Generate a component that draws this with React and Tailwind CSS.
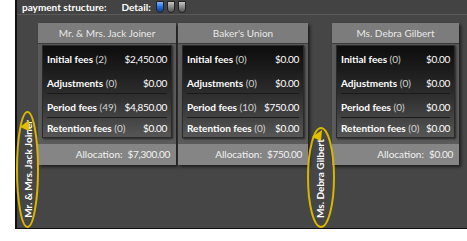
import React from "react";

const cards = [
  {
    name: "Mr. & Mrs. Jack Joiner",
    rows: [
      ["Initial fees", "(2)", "$2,450.00"],
      ["Adjustments", "(0)", "$0.00"],
      ["Period fees", "(49)", "$4,850.00"],
      ["Retention fees", "(0)", "$0.00"],
    ],
    alloc: "$7,300.00",
  },
  {
    name: "Baker's Union",
    rows: [
      ["Initial fees", "(0)", "$0.00"],
      ["Adjustments", "(0)", "$0.00"],
      ["Period fees", "(10)", "$750.00"],
      ["Retention fees", "(0)", "$0.00"],
    ],
    alloc: "$750.00",
  },
  {
    name: "Ms. Debra Gilbert",
    rows: [
      ["Initial fees", "(0)", "$0.00"],
      ["Adjustments", "(0)", "$0.00"],
      ["Period fees", "(0)", "$0.00"],
      ["Retention fees", "(0)", "$0.00"],
    ],
    alloc: "$0.00",
  },
];

function Card({ data, w }) {
  return (
    <div className={`flex flex-col bg-[#5b5b5b] shadow-[2px_2px_3px_rgba(0,0,0,0.6)] ${w}`}>
      <div className="h-[21px] flex items-center justify-center bg-[#7c7c7c] text-[#e8e8e8] text-[10px] border-b border-[#3c3c3c]">
        {data.name}
      </div>
      <div className="mx-[4px] mt-[1px] px-[4px] bg-gradient-to-b from-[#0d0d0d] via-[#2b2b2b] to-[#565656] border border-[#2a2a2a] shadow-[1px_1px_2px_rgba(0,0,0,0.6)]">
        {data.rows.map((r, i) => (
          <div
            key={i}
            className={
              i < 3
                ? "h-[24px] pt-[3px] flex items-center justify-between border-b border-[#1a1a1a] text-[10px]"
                : "h-[19px] pt-[2px] flex items-center justify-between text-[10px]"
            }
          >
            <span className="whitespace-nowrap">
              <span className="font-bold text-white">{r[0]}</span>{" "}
              <span className="text-[#d4d4d4]">{r[1]}</span>
            </span>
            <span className="text-white tracking-[-0.3px]">{r[2]}</span>
          </div>
        ))}
      </div>
      <div className="mt-[6px] h-[21px] flex items-center justify-end pr-[6px] bg-[#858585] text-[#f2f2f2] text-[10px] whitespace-pre">
        <span>Allocation:</span>
        <span className="ml-[5px] tracking-[-0.3px]">{data.alloc}</span>
      </div>
    </div>
  );
}

function Gutter({ label, w }) {
  return (
    <div className={`self-stretch flex flex-col justify-end items-center pb-[10px] ${w}`}>
      <span className="[writing-mode:vertical-rl] rotate-180 text-[10px] font-bold text-white whitespace-nowrap leading-none">
        {label}
      </span>
    </div>
  );
}

export default function App() {
  return (
    <div className="w-[467px] h-[241px] bg-white font-['Lato',sans-serif]">
      <div className="relative ml-[15px] w-[452px] h-[229px] flex flex-col bg-[#464646] border-l-2 border-b border-[#111]">
        <div className="h-[15px] flex items-center pl-[5px] bg-[#434343] border-b border-[#5a5a5a] text-[10px] font-bold text-white">
          <span>payment structure:</span>
          <span className="ml-[15px]">Detail:</span>
          <div className="ml-[5px] flex gap-[3px]">
            <div className="w-[8px] h-[12px] rounded-t-[3px] rounded-b-full bg-gradient-to-b from-[#7fb4ff] via-[#1f6fe0] to-[#0b3e92] border border-[#222]" />
            <div className="w-[8px] h-[12px] rounded-t-[3px] rounded-b-full bg-gradient-to-b from-[#c8c8c8] via-[#8a8a8a] to-[#555] border border-[#222]" />
            <div className="w-[8px] h-[12px] rounded-t-[3px] rounded-b-full bg-gradient-to-b from-[#c8c8c8] via-[#8a8a8a] to-[#555] border border-[#222]" />
          </div>
        </div>
        <div className="flex-1 flex items-start pt-[8px]">
          <Gutter label="Mr. & Mrs. Jack Joiner" w="w-[21px]" />
          <Card data={cards[0]} w="w-[138px]" />
          <div className="w-[2px]" />
          <Card data={cards[1]} w="w-[130px]" />
          <Gutter label="Ms. Debra Gilbert" w="w-[24px]" />
          <Card data={cards[2]} w="w-[127px]" />
        </div>
        <svg className="absolute left-[-2px] top-0 pointer-events-none" width="452" height="229" viewBox="0 0 452 229">
          <ellipse cx="12.5" cy="169.5" rx="10.5" ry="57.5" fill="none" stroke="#d6b600" strokeWidth="2" />
          <polygon points="5,127 14,120 14,131" fill="#e0c000" />
          <ellipse cx="306" cy="177.5" rx="13" ry="49.5" fill="none" stroke="#d6b600" strokeWidth="2" />
          <polygon points="297,137 307,130 306,141" fill="#e0c000" />
        </svg>
      </div>
    </div>
  );
}
